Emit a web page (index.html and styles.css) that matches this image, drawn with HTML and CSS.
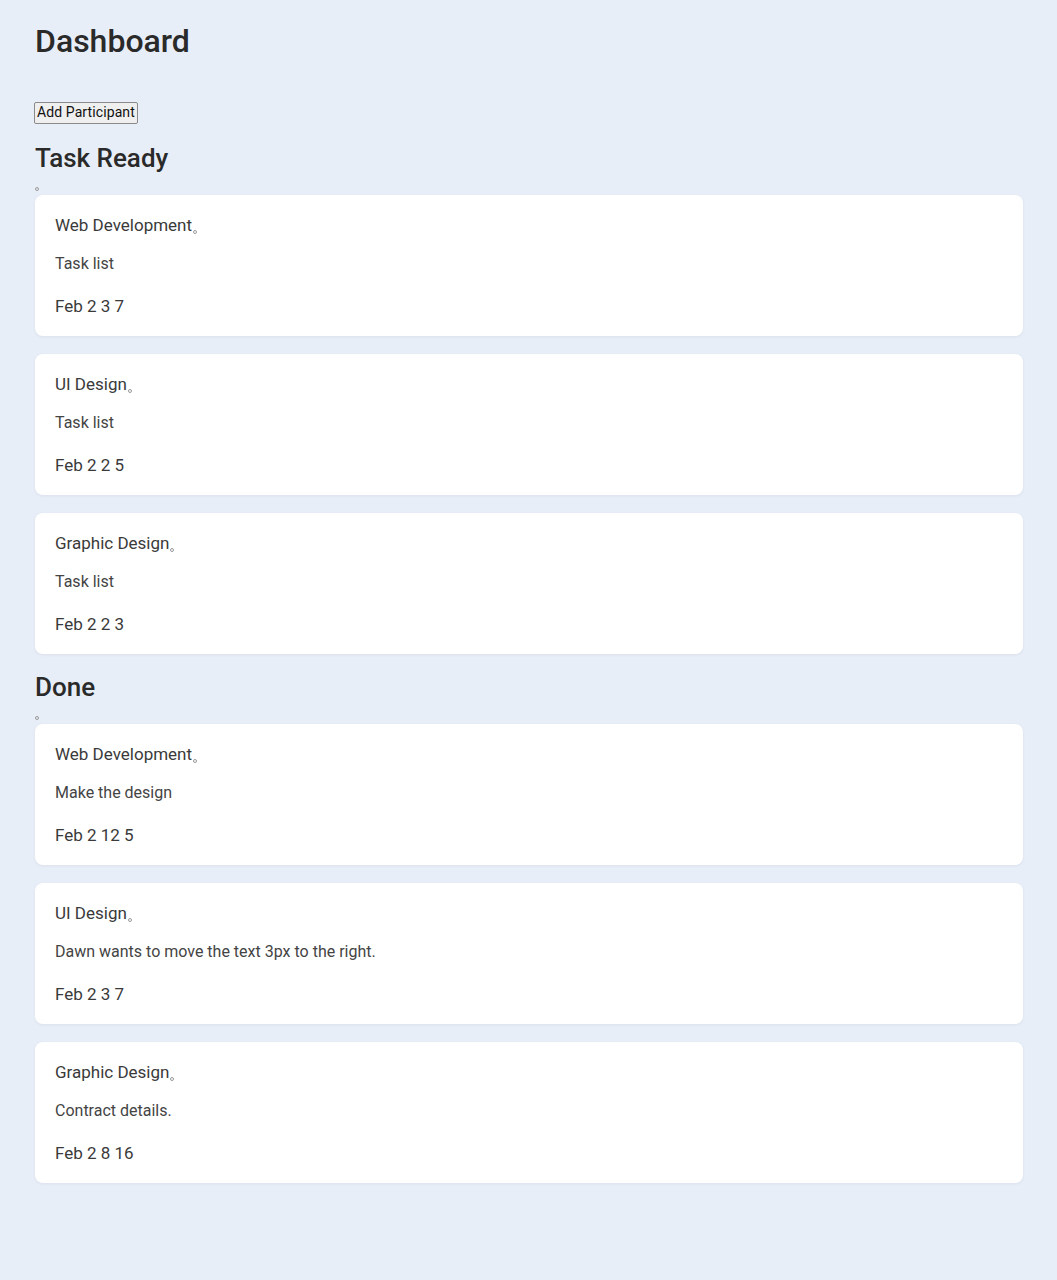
FILE: index.html
```html
<!DOCTYPE html>
<html>
<head>
<meta charset="utf-8">
<link rel="stylesheet" href="styles.css">
</head>
<body>
<main class="page">
  <h1 class="title">Dashboard</h1>
  <button class="add-btn">Add Participant</button>

  <section class="column">
    <h2 class="column-title">Task Ready</h2>
    <span class="dot dot-list"></span>
    <div class="cards">
      <div class="card">
        <p class="card-title">Web Development<span class="dot"></span></p>
        <p class="card-desc">Task list</p>
        <p class="card-meta">Feb 2 3 7</p>
      </div>
      <div class="card">
        <p class="card-title">UI Design<span class="dot"></span></p>
        <p class="card-desc">Task list</p>
        <p class="card-meta">Feb 2 2 5</p>
      </div>
      <div class="card">
        <p class="card-title">Graphic Design<span class="dot"></span></p>
        <p class="card-desc">Task list</p>
        <p class="card-meta">Feb 2 2 3</p>
      </div>
    </div>
  </section>

  <section class="column">
    <h2 class="column-title">Done</h2>
    <span class="dot dot-list"></span>
    <div class="cards">
      <div class="card">
        <p class="card-title">Web Development<span class="dot"></span></p>
        <p class="card-desc">Make the design</p>
        <p class="card-meta">Feb 2 12 5</p>
      </div>
      <div class="card">
        <p class="card-title">UI Design<span class="dot"></span></p>
        <p class="card-desc">Dawn wants to move the text 3px to the right.</p>
        <p class="card-meta">Feb 2 3 7</p>
      </div>
      <div class="card">
        <p class="card-title">Graphic Design<span class="dot"></span></p>
        <p class="card-desc">Contract details.</p>
        <p class="card-meta">Feb 2 8 16</p>
      </div>
    </div>
  </section>
</main>
</body>
</html>
```

FILE: styles.css
```css
* { box-sizing: border-box; }

html, body {
  margin: 0;
  padding: 0;
  background: #e8eef7;
}

body {
  font-family: Roboto, "Liberation Sans", sans-serif;
  color: #333;
}

.page {
  padding: 19px 34px 80px 35px;
  display: flex;
  flex-direction: column;
  align-items: flex-start;
}

.title {
  margin: 0;
  font-size: 32px;
  font-weight: 500;
  color: #2a2a2a;
  line-height: 44px;
}

.add-btn {
  margin-top: 39px;
  margin-left: -1px;
  font-family: Roboto, "Liberation Sans", sans-serif;
  font-size: 14px;
  color: #111;
  background: #efefef;
  border: 1px solid #8a8a8a;
  border-radius: 2px;
  padding: 1px 2px 2px;
  line-height: 17px;
  letter-spacing: 0.1px;
}

.column {
  width: 100%;
  display: flex;
  flex-direction: column;
  align-items: flex-start;
}

.column-title {
  margin: 16px 0 0;
  font-size: 26px;
  font-weight: 500;
  color: #2a2a2a;
  line-height: 36px;
}

.column + .column .column-title {
  margin-top: 15px;
}

.dot {
  display: inline-block;
  width: 4px;
  height: 4px;
  border: 1px solid #9a9a9a;
  border-radius: 50%;
  margin-left: 1px;
  vertical-align: -3px;
}

.dot-list {
  margin: 11px 0 4px 0;
}

.cards {
  width: 100%;
  display: flex;
  flex-direction: column;
  gap: 18px;
}

.card {
  background: #fff;
  border-radius: 8px;
  box-shadow: 0 1px 3px rgba(60, 80, 120, 0.08);
  padding: 20px 20px 20px 20px;
  display: flex;
  flex-direction: column;
}

.card p {
  margin: 0;
  line-height: 20px;
}

.card-title {
  font-size: 17px;
  color: #3a3a3a;
}

.card-desc {
  margin-top: 19px !important;
  font-size: 16px;
  color: #444;
}

.card-meta {
  margin-top: 22px !important;
  font-size: 17px;
  color: #3a3a3a;
}
```
